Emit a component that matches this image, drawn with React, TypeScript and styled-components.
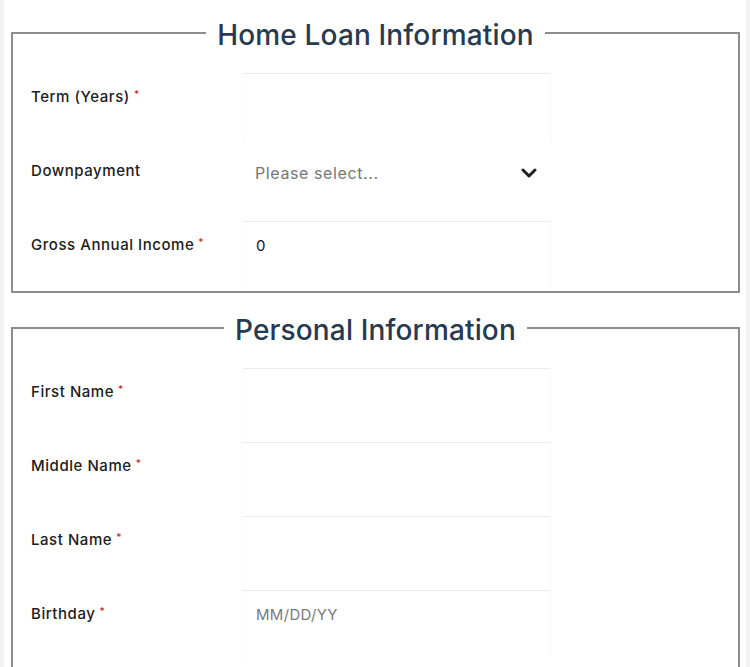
import React from "react";
import styled, { createGlobalStyle } from "styled-components";

const Global = createGlobalStyle`
  html, body { margin: 0; padding: 0; }
  body {
    background: #f1f2f6;
    font-family: Inter, "Noto Sans", Arial, sans-serif;
  }
  * { box-sizing: border-box; }
`;

const Page = styled.main`
  margin: 0 4px;
  background: #ffffff;
  min-height: 667px;
  padding: 14px 6px 0 7px;
`;

const Section = styled.fieldset<{ $tail?: boolean }>`
  margin: 0 0 16px 0;
  border: 2px solid #8d8d8d;
  padding: 0 18px ${(p) => (p.$tail ? "80px" : "0")} 18px;
  min-width: 0;
`;

const Legend = styled.legend`
  margin: 0 auto;
  padding: 4px 11px 0;
  font-size: 28px;
  line-height: 34px;
  font-weight: 500;
  color: #283a50;
  letter-spacing: 0.15px;
`;

const Rows = styled.div`
  display: grid;
  grid-template-columns: 211px 309px;
  row-gap: 4px;
  padding-top: 21px;
`;

const Label = styled.label`
  display: flex;
  align-items: flex-start;
  padding-top: 14px;
  font-size: 15px;
  line-height: 20px;
  font-weight: 500;
  letter-spacing: 0.55px;
  color: #202020;
`;

const Req = styled.span`
  color: #c62828;
  font-size: 10px;
  line-height: 10px;
  margin-left: 4px;
  margin-top: 2px;
`;

const Field = styled.input`
  height: 70px;
  width: 100%;
  padding: 0 13px 22px;
  border: 1px solid #fbfbfb;
  border-top-color: #ececec;
  border-bottom: none;
  background: #fff;
  font-family: inherit;
  font-size: 15px;
  letter-spacing: 0.3px;
  color: #111;
  outline: none;
  &::placeholder { color: #7a7a7a; }
`;

const SelectWrap = styled.div`
  position: relative;
  height: 70px;
`;

const Select = styled.select`
  appearance: none;
  -webkit-appearance: none;
  width: 100%;
  height: 70px;
  padding: 0 40px 18px 13px;
  border: none;
  background: #fff;
  font-family: inherit;
  font-size: 16px;
  letter-spacing: 0.6px;
  color: #777;
  outline: none;
`;

const Chevron = styled.svg`
  position: absolute;
  right: 14px;
  top: 21px;
  pointer-events: none;
`;

type Row = { label: string; required?: boolean; kind?: "select"; value?: string; placeholder?: string };

const loanRows: Row[] = [
  { label: "Term (Years)", required: true },
  { label: "Downpayment", kind: "select" },
  { label: "Gross Annual Income", required: true, value: "0" },
];

const personalRows: Row[] = [
  { label: "First Name", required: true },
  { label: "Middle Name", required: true },
  { label: "Last Name", required: true },
  { label: "Birthday", required: true, placeholder: "MM/DD/YY" },
];

const FormRow = ({ row }: { row: Row }) => (
  <>
    <Label>
      {row.label}
      {row.required && <Req>*</Req>}
    </Label>
    {row.kind === "select" ? (
      <SelectWrap>
        <Select defaultValue="">
          <option value="">Please select...</option>
          <option value="10">10%</option>
          <option value="20">20%</option>
        </Select>
        <Chevron width="16" height="10" viewBox="0 0 16 10">
          <path d="M2 2 L8 8 L14 2" fill="none" stroke="#1e2228" strokeWidth="3" strokeLinecap="round" strokeLinejoin="round" />
        </Chevron>
      </SelectWrap>
    ) : (
      <Field defaultValue={row.value} placeholder={row.placeholder} />
    )}
  </>
);

export default function App() {
  return (
    <>
      <Global />
      <Page>
        <Section>
          <Legend>Home Loan Information</Legend>
          <Rows>
            {loanRows.map((r) => (
              <FormRow key={r.label} row={r} />
            ))}
          </Rows>
        </Section>
        <Section $tail>
          <Legend>Personal Information</Legend>
          <Rows>
            {personalRows.map((r) => (
              <FormRow key={r.label} row={r} />
            ))}
          </Rows>
        </Section>
      </Page>
    </>
  );
}
